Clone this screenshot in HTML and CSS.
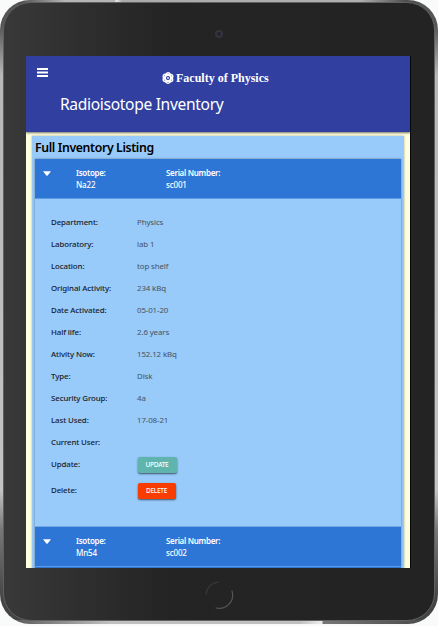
FILE: index.html
```
<!DOCTYPE html>
<html lang="en">
<head>
<meta charset="utf-8">
<title>Radioisotope Inventory</title>
<link rel="stylesheet" href="styles.css">
</head>
<body>
<div class="tablet">
  <div class="bezel">
    <div class="bezel-top"><span class="camera"></span></div>
    <main class="screen">
      <header class="appbar">
        <div class="brand-row">
          <svg class="menu" viewBox="0 0 11 9"><path d="M0 0h11v2H0zM0 3.5h11v2H0zM0 7h11v2H0z" fill="#fff"/></svg>
          <div class="brand">
            <svg class="atom" viewBox="0 0 12 12"><g fill="none" stroke="#fff" stroke-width="1.45"><ellipse cx="6" cy="6" rx="2.7" ry="5.2"/><ellipse cx="6" cy="6" rx="2.7" ry="5.2" transform="rotate(60 6 6)"/><ellipse cx="6" cy="6" rx="2.7" ry="5.2" transform="rotate(120 6 6)"/></g><circle cx="6" cy="6" r=".9" fill="#fff"/></svg>
            <span class="faculty">Faculty of Physics</span>
          </div>
        </div>
        <h1><span>Radioisotope Inventory</span></h1>
      </header>
      <section class="card">
        <h2><span>Full Inventory Listing</span></h2>
        <div class="list">
          <div class="summary">
            <svg class="caret" viewBox="0 0 8 5"><path d="M0 .2h8L4.6 4.5q-.6.6-1.2 0z" fill="#fff"/></svg>
            <div class="col iso"><b>Isotope:</b><span>Na22</span></div>
            <div class="col"><b>Serial Number:</b><span>sc001</span></div>
          </div>
          <dl class="details">
            <dt>Department:</dt><dd>Physics</dd>
            <dt>Laboratory:</dt><dd>lab 1</dd>
            <dt>Location:</dt><dd>top shelf</dd>
            <dt>Original Activity:</dt><dd>234 kBq</dd>
            <dt>Date Activated:</dt><dd>05-01-20</dd>
            <dt>Half life:</dt><dd>2.6 years</dd>
            <dt>Ativity Now:</dt><dd>152.12 kBq</dd>
            <dt>Type:</dt><dd>Disk</dd>
            <dt>Security Group:</dt><dd>4a</dd>
            <dt>Last Used:</dt><dd>17-08-21</dd>
            <dt>Current User:</dt><dd></dd>
            <dt>Update:</dt><dd><button class="update">UPDATE</button></dd>
            <dt>Delete:</dt><dd><button class="delete">DELETE</button></dd>
          </dl>
          <div class="summary second">
            <svg class="caret" viewBox="0 0 8 5"><path d="M0 .2h8L4.6 4.5q-.6.6-1.2 0z" fill="#fff"/></svg>
            <div class="col iso"><b>Isotope:</b><span>Mn54</span></div>
            <div class="col"><b>Serial Number:</b><span>sc002</span></div>
          </div>
          <div class="summary"></div>
        </div>
      </section>
    </main>
    <div class="bezel-bottom">
      <svg class="home" viewBox="0 0 30 30"><g fill="none" stroke-linecap="round"><path d="M2 14A13 13 0 0 1 14 2" stroke="#404040"/><path d="M28 11A13.4 13.4 0 0 1 12 28" stroke="#555" stroke-width="1.2"/></g></svg>
    </div>
  </div>
</div>
</body>
</html>
```
FILE: styles.css
```
* { box-sizing: border-box; }
body {
  margin: 0;
  background: #f9fbfa;
  font-family: "Noto Sans", sans-serif;
}
.tablet {
  width: 438px;
  height: 624px;
  padding: 2px 3px 3px;
  border-radius: 30px;
  background:
    linear-gradient(90deg, #505050 0, #505050 20px, #b5b5b5 65px, #b5b5b5 115px, #eee 116px, #aaa 122px, #b0b0b0 360px, #505050 405px) top / 100% 4px no-repeat,
    linear-gradient(90deg, #555 0, #666 25px, #c0c0c0 110px, #c0c0c0 300px, #eee 322px, #777 323px, #505050 410px) bottom / 100% 4px no-repeat,
    linear-gradient(#555 0, #555 25px, #b8b8b8 75px, #c4c4c4 490px, #777 530px, #444 600px);
}
.bezel {
  height: 619px;
  border: 1px solid #606060;
  border-radius: 28px;
  overflow: hidden;
  background: linear-gradient(90deg, #393939 0, #303030 65px, #242424 165px, #232323 100%);
}
.bezel-top {
  height: 53px;
  display: flex;
  justify-content: center;
  padding-top: 27px;
}
.camera {
  width: 8px;
  height: 8px;
  border: 2px solid #35333c;
  border-radius: 50%;
  background: #242335;
}
.screen {
  width: 384px;
  height: 512px;
  margin-left: 22px;
  overflow: hidden;
  background: #ffffe0;
  box-shadow: 1px 0 #080808;
}
.appbar {
  height: 76px;
  background: #3140a0;
  color: #fff;
  box-shadow: 0 1px 2px rgba(0, 0, 0, .55);
  overflow: hidden;
}
.brand-row {
  display: flex;
  height: 32px;
  padding: 12px 0 0 11px;
}
.menu { width: 11px; height: 9px; }
.brand {
  display: flex;
  align-items: center;
  height: 19px;
  margin-left: 114px;
}
.atom { width: 12px; height: 12px; margin-right: 2px; }
.faculty {
  font: bold 12px/16px "Liberation Serif", serif;
  white-space: nowrap;
}
h1 {
  margin: 4px 0 0 34px;
  font-weight: 400;
  font-size: 15.6px;
  line-height: 24px;
  letter-spacing: -.33px;
}
.card {
  width: 372px;
  height: 460px;
  margin: 4px 6px 0;
  padding: 0 3px;
  background: #98cafa;
  box-shadow: 0 0 2px rgba(0, 0, 0, .35);
}
h2 {
  margin: 0;
  height: 23px;
  font-size: 12.3px;
  line-height: 24px;
  font-weight: 600;
  letter-spacing: -.37px;
  color: #000;
}
.list { box-shadow: 0 0 2px rgba(80, 60, 60, .6); }
.summary {
  display: flex;
  height: 40px;
  padding: 8px 0 0 8px;
  background: #2e76d5;
  border-bottom: 1px solid #5b9ae4;
  color: #fff;
  font-size: 8px;
  line-height: 12px;
  letter-spacing: -.3px;
}
.caret { width: 8px; height: 5px; margin-top: 4px; }
.col { display: flex; flex-direction: column; white-space: nowrap; }
.col b { font-weight: 600; }
.col span { font-weight: 500; letter-spacing: -.15px; }
.iso { width: 90px; margin-left: 25px; }
.details {
  display: grid;
  grid-template-columns: 86px 1fr;
  grid-template-rows: repeat(11, 22px) 26px 26px;
  height: 328px;
  margin: 0;
  padding: 12px 0 0 16px;
  background: #98cafa;
  border-bottom: 1px solid #74a9e5;
  font-size: 7.9px;
  line-height: 22px;
  letter-spacing: -.12px;
}
dt { color: #17212b; font-weight: 500; }
dd { margin: 0; color: #475361; }
button {
  display: block;
  height: 16px;
  margin: 4px 0 0 .5px;
  padding: 0;
  border: 0;
  border-radius: 2px;
  color: #fff;
  font: 500 6.5px/16px "Noto Sans", sans-serif;
  letter-spacing: -.25px;
  text-align: center;
  box-shadow: 0 1px 2px rgba(0, 0, 0, .6);
}
.update { width: 39px; background: #5fb5ad; }
.delete { width: 38px; background: #f93c00; }
.bezel-bottom { height: 52px; padding: 12px 0 0 200px; }
.home { display: block; width: 30px; height: 30px; }
```
